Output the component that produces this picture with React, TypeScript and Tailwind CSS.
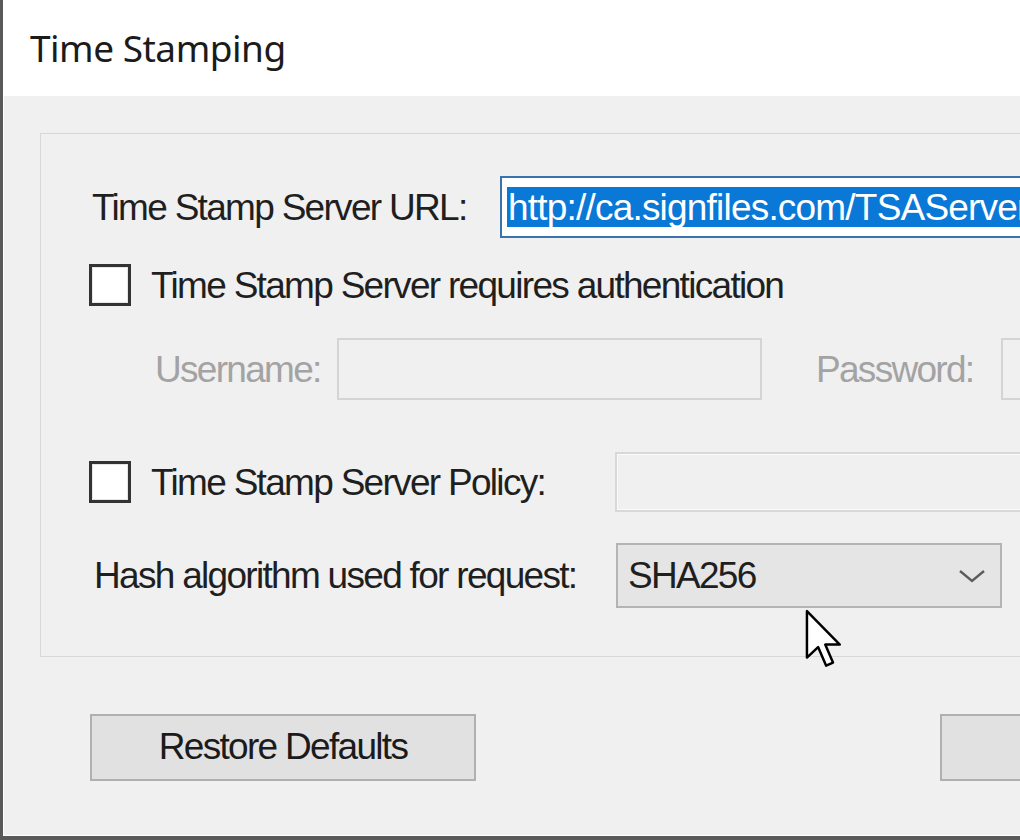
import React from 'react';

const sans = "font-['Liberation_Sans',Arial,sans-serif]";
const label = `${sans} text-[37px] tracking-[-1.7px] leading-none whitespace-nowrap`;

function CheckBox() {
  return (
    <div className="w-[42px] h-[42px] shrink-0 border-[3px] border-[#333333] bg-white">
      <div className="w-full h-full border border-[#e6e6e6]" />
    </div>
  );
}

function Cursor() {
  return (
    <svg
      className="absolute left-[803px] top-[608px]"
      width="42"
      height="62"
      viewBox="0 0 13 20"
    >
      <path
        d="M1 1 L1 16 L4.6 12.6 L7.2 18.6 L9.4 17.6 L6.9 11.8 L11.6 11.8 Z"
        fill="#ffffff"
        stroke="#000000"
        strokeWidth="0.8"
        strokeLinejoin="round"
      />
    </svg>
  );
}

export default function App() {
  return (
    <div className="relative w-[1020px] h-[840px] overflow-hidden bg-[#5a5a5a] pl-[3px] pb-[4px]">
      <div className="w-full h-full bg-[#f0f0f0] border-l border-b border-white overflow-hidden">
        {/* dialog title strip */}
        <div className="h-[96px] bg-white flex items-center pl-[26px] pb-[2px]">
          <span className="font-['Noto_Sans','Open_Sans',sans-serif] text-[37px] tracking-[-0.5px] text-[#1b1b1b] leading-none">
            Time Stamping
          </span>
        </div>

        <div className="pl-[36px]">
          {/* group box */}
          <div className="mt-[37px] w-[1100px] border border-[#d8d8d8] flex flex-col text-[#1f1f1f]">
            <div className="mt-[42px] h-[62px] flex items-center pl-[51px]">
              <div className={`${label} w-[408px] shrink-0`}>Time Stamp Server URL:</div>
              <div className="w-[600px] h-[62px] border-2 border-[#3a72ad] bg-white flex items-center pl-[5px] overflow-hidden">
                <span className={`${sans} text-[37px] tracking-[-0.8px] leading-none whitespace-nowrap bg-[#0a78d7] text-white h-[40px] flex items-center pl-[1px]`}>
                  http://ca.signfiles.com/TSAServer.aspx
                </span>
              </div>
            </div>

            <div className="mt-[24px] h-[46px] flex items-center pl-[48px]">
              <CheckBox />
              <div className={`${label} ml-[20px]`}>Time Stamp Server requires authentication</div>
            </div>

            <div className="mt-[30px] h-[62px] flex items-center pl-[114px] text-[#a3a3a3]">
              <div className={`${label} w-[182px] shrink-0`}>Username:</div>
              <div className="w-[425px] h-[62px] shrink-0 border-2 border-[#d4d4d4] bg-[#f0f0f0]" />
              <div className={`${label} ml-[54px] w-[185px] shrink-0`}>Password:</div>
              <div className="w-[300px] h-[62px] shrink-0 border-2 border-[#d4d4d4] bg-[#f0f0f0]" />
            </div>

            <div className="mt-[52px] h-[60px] flex items-center pl-[48px]">
              <CheckBox />
              <div className={`${label} ml-[20px] w-[464px] shrink-0`}>Time Stamp Server Policy:</div>
              <div className="w-[500px] h-[60px] shrink-0 border-2 border-[#d8d8d8] bg-[#f0f0f0]">
                <div className="w-full h-full border border-[#fafafa]" />
              </div>
            </div>

            <div className="mt-[31px] h-[65px] flex items-center pl-[53px]">
              <div className={`${label} w-[522px] shrink-0`}>Hash algorithm used for request:</div>
              <div className="w-[386px] h-[65px] shrink-0 border-2 border-[#b4b4b4] bg-[#e5e5e5] flex items-center justify-between pl-[10px] pr-[14px]">
                <span className={label}>SHA256</span>
                <svg width="28" height="16" viewBox="0 0 28 16">
                  <polyline points="2,3 14,13 26,3" fill="none" stroke="#5c5c5c" strokeWidth="2.4" />
                </svg>
              </div>
            </div>

            <div className="h-[48px]" />
          </div>

          {/* dialog buttons */}
          <div className="mt-[57px] flex pl-[50px]">
            <button className={`${label} w-[386px] h-[67px] shrink-0 border-2 border-[#b0b0b0] bg-[#e1e1e1] text-[#1b1b1b] pb-[2px]`}>
              Restore Defaults
            </button>
            <button className="ml-[464px] w-[200px] h-[67px] shrink-0 border-2 border-[#b0b0b0] bg-[#e1e1e1]" />
          </div>
        </div>
      </div>
      <Cursor />
    </div>
  );
}
